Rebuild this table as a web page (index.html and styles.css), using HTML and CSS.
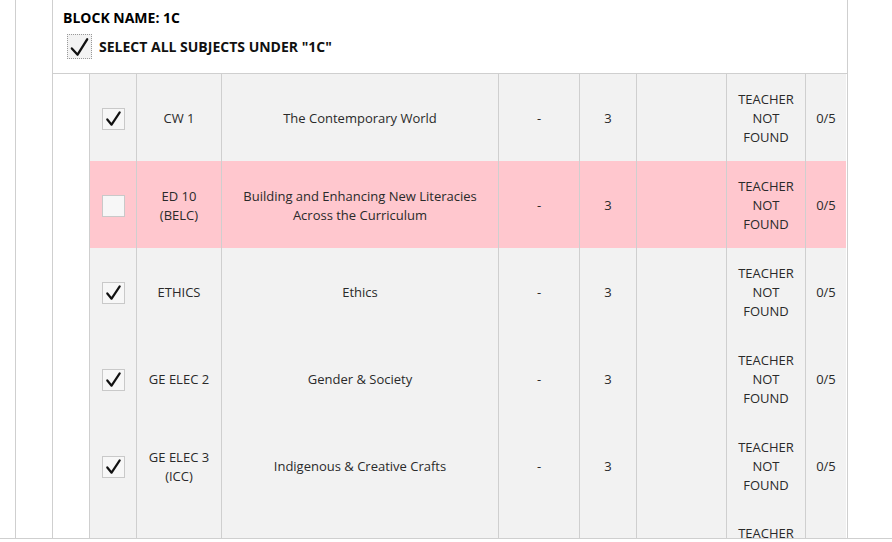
FILE: index.html
```html
<!DOCTYPE html>
<html>
<head>
<meta charset="utf-8">
<link rel="stylesheet" href="styles.css">
</head>
<body>
<div class="page">
  <div class="outer">
    <div class="card">
      <div class="card-head">
        <div class="block-name">BLOCK NAME: 1C</div>
        <label class="select-all">
          <span class="cb cb-focus"><svg viewBox="0 0 24 24" width="24" height="24"><path d="M4 13.5 L10 20 L20 4" fill="none" stroke="#111" stroke-width="2.4" stroke-linecap="round" stroke-linejoin="round"/></svg></span>
          <span class="select-label">SELECT ALL SUBJECTS UNDER "1C"</span>
        </label>
      </div>
      <div class="table-wrap">
        <div class="grid">
          <div class="cell"><span class="cb"><svg viewBox="0 0 22 22" width="21" height="21"><path d="M4.5 12 L9 17.5 L17.5 4.5" fill="none" stroke="#111" stroke-width="2.3" stroke-linecap="round" stroke-linejoin="round"/></svg></span></div>
          <div class="cell">CW 1</div>
          <div class="cell">The Contemporary World</div>
          <div class="cell">-</div>
          <div class="cell">3</div>
          <div class="cell"></div>
          <div class="cell">TEACHER<br>NOT<br>FOUND</div>
          <div class="cell">0/5</div>

          <div class="cell pink"><span class="cb"></span></div>
          <div class="cell pink">ED 10<br>(BELC)</div>
          <div class="cell pink">Building and Enhancing New Literacies<br>Across the Curriculum</div>
          <div class="cell pink">-</div>
          <div class="cell pink">3</div>
          <div class="cell pink"></div>
          <div class="cell pink">TEACHER<br>NOT<br>FOUND</div>
          <div class="cell pink">0/5</div>

          <div class="cell"><span class="cb"><svg viewBox="0 0 22 22" width="21" height="21"><path d="M4.5 12 L9 17.5 L17.5 4.5" fill="none" stroke="#111" stroke-width="2.3" stroke-linecap="round" stroke-linejoin="round"/></svg></span></div>
          <div class="cell">ETHICS</div>
          <div class="cell">Ethics</div>
          <div class="cell">-</div>
          <div class="cell">3</div>
          <div class="cell"></div>
          <div class="cell">TEACHER<br>NOT<br>FOUND</div>
          <div class="cell">0/5</div>

          <div class="cell"><span class="cb"><svg viewBox="0 0 22 22" width="21" height="21"><path d="M4.5 12 L9 17.5 L17.5 4.5" fill="none" stroke="#111" stroke-width="2.3" stroke-linecap="round" stroke-linejoin="round"/></svg></span></div>
          <div class="cell">GE ELEC 2</div>
          <div class="cell">Gender &amp; Society</div>
          <div class="cell">-</div>
          <div class="cell">3</div>
          <div class="cell"></div>
          <div class="cell">TEACHER<br>NOT<br>FOUND</div>
          <div class="cell">0/5</div>

          <div class="cell"><span class="cb"><svg viewBox="0 0 22 22" width="21" height="21"><path d="M4.5 12 L9 17.5 L17.5 4.5" fill="none" stroke="#111" stroke-width="2.3" stroke-linecap="round" stroke-linejoin="round"/></svg></span></div>
          <div class="cell">GE ELEC 3<br>(ICC)</div>
          <div class="cell">Indigenous &amp; Creative Crafts</div>
          <div class="cell">-</div>
          <div class="cell">3</div>
          <div class="cell"></div>
          <div class="cell">TEACHER<br>NOT<br>FOUND</div>
          <div class="cell">0/5</div>

          <div class="cell"></div>
          <div class="cell"></div>
          <div class="cell"></div>
          <div class="cell"></div>
          <div class="cell"></div>
          <div class="cell"></div>
          <div class="cell cell-top">TEACHER</div>
          <div class="cell"></div>
        </div>
      </div>
    </div>
  </div>
</div>
</body>
</html>
```

FILE: styles.css
```css
html, body {
  margin: 0;
  padding: 0;
  background: #fff;
}
body {
  font-family: "Open Sans", "Noto Sans", sans-serif;
  color: #222;
}
.page {
  height: 538px;
  border-bottom: 1px solid #cfcfcf;
  overflow: hidden;
  padding-left: 15px;
}
.outer {
  height: 100%;
  border-left: 1px solid #cfcfcf;
  padding-left: 36px;
}
.card {
  width: 794px;
  height: 100%;
  border-left: 1px solid #cfcfcf;
  border-right: 1px solid #cfcfcf;
}
.card-head {
  height: 73px;
  box-sizing: border-box;
  padding: 8px 0 0 10px;
}
.block-name {
  font-weight: 700;
  font-size: 14px;
  line-height: 19px;
  color: #000;
}
.select-all {
  display: flex;
  align-items: center;
  gap: 7px;
  margin-top: 7px;
  margin-left: 4px;
}
.select-label {
  font-weight: 700;
  font-size: 14px;
  color: #111;
}
.cb {
  display: inline-flex;
  align-items: center;
  justify-content: center;
  width: 23px;
  height: 22px;
  box-sizing: border-box;
  border: 1px solid #c9c9c9;
  background: #f7f7f7;
}
.cb-focus {
  width: 25px;
  height: 25px;
  border: 1px dotted #999;
  background: #f3f3f3;
}
.table-wrap {
  border-top: 1px solid #cfcfcf;
  padding-left: 36px;
}
.grid {
  display: grid;
  grid-template-columns: 47px 85px 277px 81px 57px 90px 79px 41px;
  grid-auto-rows: 87px;
}
.cell {
  box-sizing: border-box;
  border-left: 1px solid #cfcfcf;
  background: #f2f2f2;
  display: flex;
  align-items: center;
  justify-content: center;
  text-align: center;
  font-size: 13px;
  line-height: 19px;
  color: #2a2a2a;
  padding: 2px 4px 0;
}
.cell.pink {
  background: #ffc7ce;
}
.cell-top {
  align-items: flex-start;
  padding-top: 15px;
}
```
